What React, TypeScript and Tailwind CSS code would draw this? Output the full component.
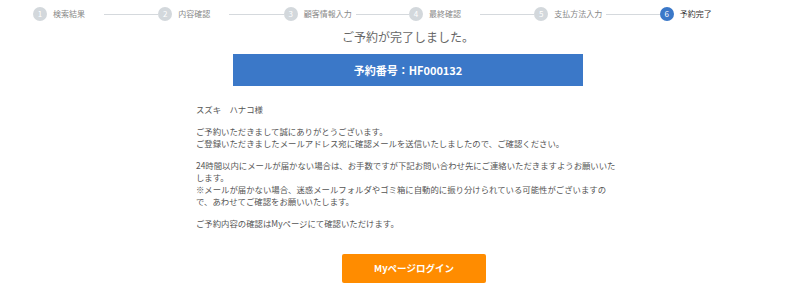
const steps = ["検索結果", "内容確認", "顧客情報入力", "最終確認", "支払方法入力", "予約完了"];

// step bar for the booking flow, last step is current
function StepBar({ current }: { current: number }) {
  return (
    <div className="ml-[33px] grid h-[28px] w-[752px] grid-cols-6 items-center">
      {steps.map((label, i) => {
        const active = i + 1 === current;
        return (
          <div key={label} className="flex items-center">
            <span
              className={`flex h-[14px] w-[14px] shrink-0 items-center justify-center rounded-full text-[8px] leading-none text-white ${
                active ? "bg-[#3a78c8]" : "bg-[#d3d8dc]"
              }`}
            >
              {i + 1}
            </span>
            <span
              className={`ml-[6px] min-w-[47px] text-[8px] leading-none ${
                active ? "text-[#333]" : "text-[#888]"
              }`}
            >
              {label}
            </span>
            {i < steps.length - 1 && <span className="ml-[4px] h-px flex-1 bg-[#d5d9dd]" />}
          </div>
        );
      })}
    </div>
  );
}

export default function App() {
  return (
    <div
      className="h-[286px] w-[800px] overflow-hidden bg-white"
      style={{ fontFamily: '"Noto Sans CJK JP", "Noto Sans", sans-serif' }}
    >
      <StepBar current={6} />

      <main className="ml-[32px] w-[752px]">
        <h1 className="text-center text-[12px] font-normal leading-[17px] text-[#666]">
          ご予約が完了しました。
        </h1>

        <div className="mx-auto mt-[9px] flex h-[32px] w-[350px] items-center justify-center bg-[#3b78c8] text-[11px] font-bold text-white">
          予約番号：HF000132
        </div>

        {/* message */}
        <div className="mx-auto mt-[17px] w-[424px] text-[8.4px] leading-[12px] text-[#555]">
          <p>スズキ　ハナコ様</p>
          <p className="mt-[10px]">
            ご予約いただきまして誠にありがとうございます。
            <br />
            ご登録いただきましたメールアドレス宛に確認メールを送信いたしましたので、ご確認ください。
          </p>
          <p className="mt-[10px]">
            24時間以内にメールが届かない場合は、お手数ですが下記お問い合わせ先にご連絡いただきますようお願いいたします。
            <br />
            ※メールが届かない場合、迷惑メールフォルダやゴミ箱に自動的に振り分けられている可能性がございますので、あわせてご確認をお願いいたします。
          </p>
          <p className="mt-[10px]">ご予約内容の確認はMyページにて確認いただけます。</p>
        </div>

        <div className="mt-[25px] flex justify-center pl-[12px]">
          <button className="h-[29px] w-[144px] rounded-[2px] bg-[#ff8c00] text-[9.5px] font-bold text-white">
            Myページログイン
          </button>
        </div>
      </main>
    </div>
  );
}
